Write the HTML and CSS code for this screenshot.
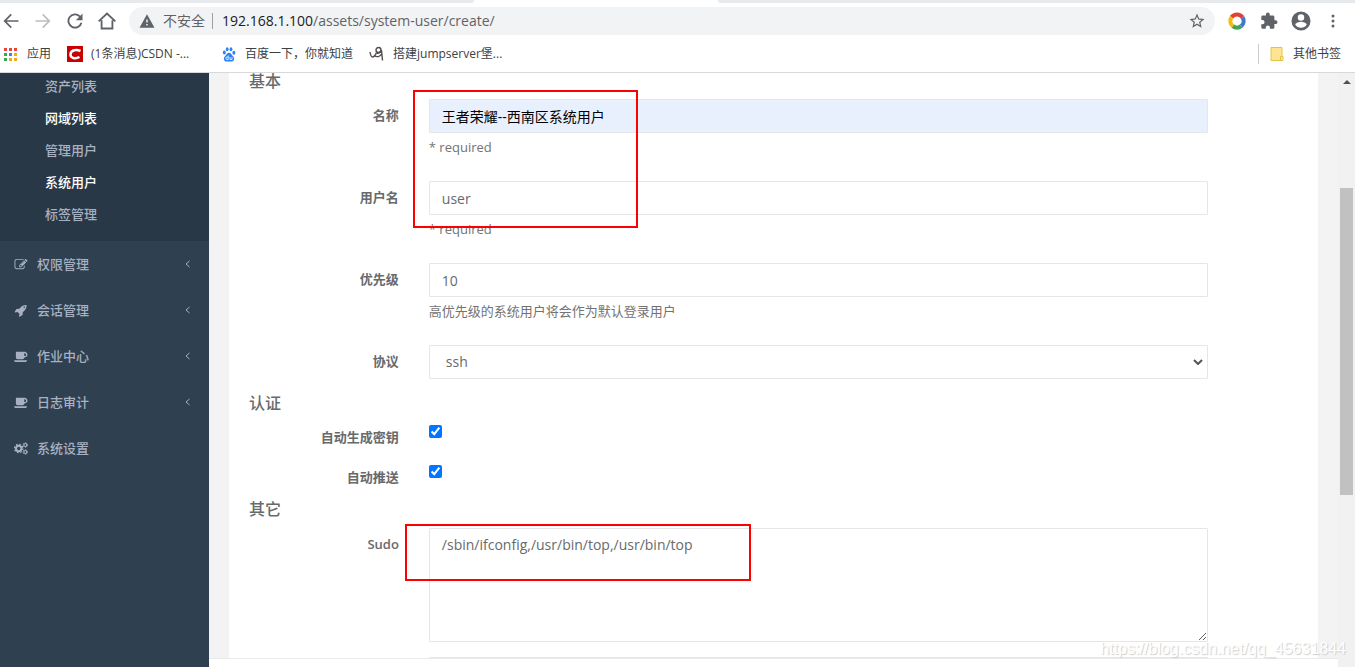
FILE: index.html
```html
<!DOCTYPE html>
<html lang="zh-CN">
<head>
<meta charset="utf-8">
<title>系统用户</title>
<link rel="stylesheet" href="styles.css">
</head>
<body>
<header class="browser">
  <div class="tabs"><span class="tabs-left"></span><span class="tabs-right"></span></div>
  <div class="toolbar">
    <button class="tool" aria-label="后退"><svg viewBox="0 0 24 24"><path d="M21 11H6.8l6.2-6.2L11.6 3.400 3 12l8.600 8.600 1.400-1.400L6.800 13H21z"/></svg></button>
    <button class="tool tool-off" aria-label="前进"><svg viewBox="0 0 24 24"><path d="M3 11h14.200l-6.200-6.200 1.400-1.400L21 12l-8.600 8.600-1.400-1.400 6.200-6.200H3z"/></svg></button>
    <button class="tool" aria-label="刷新"><svg viewBox="0 0 24 24"><path d="M18.4 5.700A9 9 0 1 0 20.800 14h-2.300A6.800 6.800 0 1 1 16.900 7.200L13 11h8V3z"/></svg></button>
    <button class="tool" aria-label="主页"><svg viewBox="0 0 24 24"><path d="M2 12.500 12 3l10 9.500M5.500 11v10h13V11" fill="none" stroke="currentColor" stroke-width="2.2"/></svg></button>
    <div class="omnibox">
      <svg class="omni-icon" viewBox="0 0 24 24"><path d="M2 21h20L12 3zm11-3h-2v-2h2zm0-4h-2v-4h2z"/></svg>
      <span class="unsafe">不安全</span>
      <span class="omni-line"></span>
      <span class="url"><b>192.168.1.100</b>/assets/system-user/create/</span>
      <button class="star" aria-label="收藏"><svg viewBox="0 0 24 24"><path d="M22 9.240l-7.190-.62L12 2 9.190 8.630 2 9.240l5.460 4.730L5.820 21 12 17.270 18.180 21l-1.630-7.030zM12 15.400l-3.760 2.270 1-4.280-3.320-2.880 4.380-.38L12 6.100l1.710 4.040 4.380.38-3.320 2.880 1 4.280z"/></svg></button>
    </div>
    <button class="tool" aria-label="扩展"><svg viewBox="0 0 24 24" fill="none" stroke-width="5"><path d="M5.500 7.500A8 8 0 0 1 18.500 7.500" stroke="#e04335"/><path d="M18.500 7.500A8 8 0 0 1 17 18.200" stroke="#4078d0"/><path d="M17 18.200A8 8 0 0 1 7 18.200" stroke="#3fa352"/><path d="M7 18.200A8 8 0 0 1 5.500 7.500" stroke="#f5b912"/></svg></button>
    <button class="tool" aria-label="扩展程序"><svg viewBox="-1 -1 26 26"><path d="M20.500 11H19V7c0-1.100-.9-2-2-2h-4V3.500a2.500 2.500 0 0 0-5 0V5H4c-1.100 0-2 .9-2 2v3.800h1.500a2.700 2.700 0 0 1 0 5.400H2V20c0 1.100.9 2 2 2h3.800v-1.500a2.700 2.700 0 0 1 5.400 0V22H17c1.100 0 2-.9 2-2v-4h1.500a2.500 2.500 0 0 0 0-5z"/></svg></button>
    <button class="tool" aria-label="个人资料"><svg viewBox="1.500 1.500 21 21"><path d="M12 2a10 10 0 1 0 0 20 10 10 0 0 0 0-20zm0 3a3.400 3.400 0 1 1 0 6.800A3.400 3.400 0 0 1 12 5zm0 14.200a7.200 7.200 0 0 1-6-3.200c0-2 4-3.100 6-3.100s6 1.100 6 3.100a7.200 7.200 0 0 1-6 3.200z"/></svg></button>
    <button class="tool" aria-label="菜单"><svg viewBox="0 0 24 24"><circle cx="12" cy="6" r="1.800"/><circle cx="12" cy="12" r="1.800"/><circle cx="12" cy="18" r="1.800"/></svg></button>
  </div>
  <nav class="bookmarks">
    <a class="bookmark apps" href="#"><svg viewBox="0 0 13 13"><path fill="#e8453c" d="M0 0h3v3H0zM5 0h3v3H5zM10 0h3v3h-3z"/><path fill="#34a853" d="M0 5h3v3H0zM0 10h3v3H0z"/><path fill="#2b8cf0" d="M5 5h3v3H5z"/><path fill="#f4a915" d="M10 5h3v3h-3zM5 10h3v3H5zM10 10h3v3h-3z"/></svg>应用</a>
    <a class="bookmark csdn" href="#"><svg viewBox="0 0 16 16"><path fill="#c80000" d="M0 0h16v16H0z"/><path d="M13.500 5C10 3.500 4 3.500 3.500 8s5 5 9 3" fill="none" stroke="#fff" stroke-width="2.500"/></svg>(1条消息)CSDN -...</a>
    <a class="bookmark" href="#"><svg viewBox="0 0 16 16" fill="#2d82f5"><ellipse cx="3.300" cy="6.600" rx="1.500" ry="2"/><ellipse cx="6.200" cy="3.200" rx="1.400" ry="2"/><ellipse cx="10" cy="3.200" rx="1.400" ry="2"/><ellipse cx="12.900" cy="6.800" rx="1.500" ry="2"/><path d="M8 6.800c2 0 2.500 2.200 4 3.400 2.200 2 1 5.300-1.500 5.300H5.500C2.800 15.500 2 12 4 10.200 5.500 9 6 6.800 8 6.800z"/><path d="M7.200 9.500v4H6a1.200 1.200 0 0 1 0-2.500h1M9 11v2.500h2V11" fill="none" stroke="#fff" stroke-width=".8"/></svg>百度一下，你就知道</a>
    <a class="bookmark" href="#"><svg viewBox="0 0 16 16" fill="none" stroke="#514d4d" stroke-width="1.400"><path d="M1 6c.5 3 1 5 2.500 5 2 0 3-2 4-4.500"/><circle cx="9.500" cy="4" r="2.500"/><path d="M8 7.500c3-.5 4.500-2 4.500-3.500l1 10.500M5 9.500c3 2 6 1.500 8-2"/></svg>搭建jumpserver堡...</a>
    <a class="bookmark other" href="#"><svg viewBox="0 0 14 16"><path d="M1 1.500h11v9h1v4H1z" fill="#ffe593" stroke="#e6c24a"/><path d="M10.500 14v-3.500h2" fill="none" stroke="#e6c24a"/></svg>其他书签</a>
  </nav>
</header>

<div class="page">
  <aside class="sidebar">
    <nav>
      <ul class="submenu">
        <li><a href="#">资产列表</a></li>
        <li><a class="on" href="#">网域列表</a></li>
        <li><a href="#">管理用户</a></li>
        <li><a class="on" href="#">系统用户</a></li>
        <li><a href="#">标签管理</a></li>
      </ul>
      <ul class="menu">
        <li><a href="#"><svg class="menu-icon" viewBox="0 0 1792 1792"><path d="M888 1184l116-116-152-152-116 116v56h96v96h56zm440-720q-16-16-33 1l-350 350q-17 17-1 33t33-1l350-350q17-17 1-33zm80 594v190q0 119-84.500 203.500t-203.500 84.500h-832q-119 0-203.500-84.500t-84.500-203.500v-832q0-119 84.500-203.500t203.500-84.500h832q63 0 117 25 15 7 18 23 3 17-9 29l-49 49q-14 14-32 8-23-6-45-6h-832q-66 0-113 47t-47 113v832q0 66 47 113t113 47h832q66 0 113-47t47-113v-126q0-13 9-22l64-64q15-15 35-7t20 29zm-96-738l288 288-672 672h-288v-288zm444 132l-92 92-288-288 92-92q28-28 68-28t68 28l152 152q28 28 28 68t-28 68z"/></svg>权限管理<svg class="arrow" viewBox="0 0 5 8" fill="none" stroke="currentColor"><path d="M4.500 1 1 4l3.500 3"/></svg></a></li>
        <li><a href="#"><svg class="menu-icon" viewBox="0 0 1792 1792"><path d="M1440 448q0-40-28-68t-68-28-68 28-28 68 28 68 68 28 68-28 28-68zm224-288q0 249-75.500 430.500t-253.500 360.500q-81 80-195 176l-20 379q-2 16-16 26l-384 224q-7 4-16 4-12 0-23-9l-64-64q-13-14-8-32l85-276-281-281-276 85q-3 1-9 1-14 0-23-9l-64-64q-17-19-5-39l224-384q10-14 26-16l379-20q96-114 176-195 188-187 358-258t431-71q14 0 24 9.500t10 22.500z"/></svg>会话管理<svg class="arrow" viewBox="0 0 5 8" fill="none" stroke="currentColor"><path d="M4.500 1 1 4l3.500 3"/></svg></a></li>
        <li><a href="#"><svg class="menu-icon" viewBox="0 0 1920 1792"><path d="M1664 640q0-80-56-136t-136-56h-64v384h64q80 0 136-56t56-136zm-1664 768h1792q0 106-75 181t-181 75h-1280q-106 0-181-75t-75-181zm1856-768q0 159-112.500 271.500t-271.500 112.500h-64v32q0 92-66 158t-158 66h-704q-92 0-158-66t-66-158v-736q0-26 19-45t45-19h1152q159 0 271.500 112.500t112.500 271.500z"/></svg>作业中心<svg class="arrow" viewBox="0 0 5 8" fill="none" stroke="currentColor"><path d="M4.500 1 1 4l3.500 3"/></svg></a></li>
        <li><a href="#"><svg class="menu-icon" viewBox="0 0 1920 1792"><path d="M1664 640q0-80-56-136t-136-56h-64v384h64q80 0 136-56t56-136zm-1664 768h1792q0 106-75 181t-181 75h-1280q-106 0-181-75t-75-181zm1856-768q0 159-112.500 271.500t-271.500 112.500h-64v32q0 92-66 158t-158 66h-704q-92 0-158-66t-66-158v-736q0-26 19-45t45-19h1152q159 0 271.500 112.500t112.500 271.500z"/></svg>日志审计<svg class="arrow" viewBox="0 0 5 8" fill="none" stroke="currentColor"><path d="M4.500 1 1 4l3.500 3"/></svg></a></li>
        <li><a href="#"><svg class="menu-icon" viewBox="0 0 14 13"><g fill="none" stroke="currentColor"><circle cx="4.700" cy="6.500" r="2.700" stroke-width="2"/><circle cx="4.700" cy="6.500" r="4.200" stroke-width="1.200" stroke-dasharray="1.650 1.650"/><circle cx="11.300" cy="3" r="1.500" stroke-width="1.200"/><circle cx="11.300" cy="3" r="2.400" stroke-width=".8" stroke-dasharray="1.250 1.250"/><circle cx="11.300" cy="10" r="1.500" stroke-width="1.200"/><circle cx="11.300" cy="10" r="2.400" stroke-width=".8" stroke-dasharray="1.250 1.250"/></g></svg>系统设置</a></li>
      </ul>
    </nav>
  </aside>

  <main class="content">
    <form class="panel">
      <h3 class="section">基本</h3>
      <div class="row">
        <label class="label" for="name">名称</label>
        <div class="control"><input class="input autofill" id="name" type="text" value="王者荣耀--西南区系统用户"><p class="help">* required</p></div>
      </div>
      <div class="row">
        <label class="label" for="username">用户名</label>
        <div class="control"><input class="input" id="username" type="text" value="user"><p class="help">* required</p></div>
      </div>
      <div class="row">
        <label class="label" for="priority">优先级</label>
        <div class="control"><input class="input" id="priority" type="text" value="10"><p class="help">高优先级的系统用户将会作为默认登录用户</p></div>
      </div>
      <div class="row">
        <label class="label" for="protocol">协议</label>
        <div class="control select-wrap"><select class="input select" id="protocol"><option>ssh</option></select><svg class="caret" viewBox="0 0 10 6" fill="none"><path d="M1 1l4 4 4-4"/></svg></div>
      </div>
      <h3 class="section">认证</h3>
      <div class="row check-row">
        <label class="label" for="autokey">自动生成密钥</label>
        <div class="control"><input class="check" id="autokey" type="checkbox" checked></div>
      </div>
      <div class="row check-row">
        <label class="label" for="autopush">自动推送</label>
        <div class="control"><input class="check" id="autopush" type="checkbox" checked></div>
      </div>
      <h3 class="section">其它</h3>
      <div class="row area-row">
        <label class="label" for="sudo">Sudo</label>
        <div class="control"><textarea class="input area" id="sudo">/sbin/ifconfig,/usr/bin/top,/usr/bin/top</textarea></div>
      </div>
      <div class="row">
        <span></span>
        <div class="control"><input class="input" type="text" aria-label="Shell"></div>
      </div>
      <span class="mark mark-names"></span>
      <span class="mark mark-sudo"></span>
    </form>
    <footer class="footer"></footer>
  </main>

  <div class="scrollbar">
    <svg class="scroll-up" viewBox="0 0 8 4" fill="#505050"><path d="M0 4l4-4 4 4z"/></svg>
    <span class="thumb"></span>
    <span class="rest"></span>
  </div>
  <span class="watermark">https://blog.csdn.net/qq_45631844</span>
</div>
</body>
</html>
```

FILE: styles.css
```css
* {
  box-sizing: border-box;
}

body {
  margin: 0;
  height: 100vh;
  display: flex;
  flex-direction: column;
  overflow: hidden;
  font: 13px/20px "Open Sans", "Noto Sans CJK SC", sans-serif;
  color: #676a6c;
}

a {
  color: inherit;
  text-decoration: none;
}

button {
  padding: 0;
  border: 0;
  background: none;
  color: inherit;
}

svg {
  display: block;
  flex: none;
}

svg:not([fill]) {
  fill: currentColor;
}

ul {
  margin: 0;
  padding: 0;
  list-style: none;
}

/* Browser frame */
.browser {
  flex: none;
  background: #fff;
  border-bottom: 1px solid #d8d9dc;
  color: #5f6368;
}

.tabs {
  display: flex;
  justify-content: space-between;
  height: 3px;
}

.tabs-left {
  width: 35%;
  background: #e7eaed;
  border-bottom-right-radius: 3px;
}

.tabs-right {
  width: 47%;
  background: #e7eaed;
  border-bottom-left-radius: 3px;
}

.toolbar {
  display: flex;
  align-items: center;
  gap: 12px;
  height: 36px;
  padding: 0 12px 0 1px;
}

.tool svg {
  width: 20px;
  height: 20px;
}

.tool-off {
  color: #bcbec1;
}

.omnibox {
  flex: 1;
  display: flex;
  align-items: center;
  height: 28px;
  padding: 0 9px;
  border-radius: 14px;
  background: #f1f3f4;
  font-size: 14px;
}

.omni-icon,
.star svg {
  width: 18px;
  height: 18px;
}

.unsafe {
  margin-left: 7px;
}

.omni-line {
  width: 1px;
  height: 16px;
  margin: 0 9px 0 7px;
  background: #9aa0a6;
}

.url {
  flex: 1;
}

.url b {
  font-weight: 400;
  color: #202124;
}

.bookmarks {
  display: flex;
  align-items: center;
  gap: 16px;
  height: 33px;
  padding: 0 14px 3px 4px;
  font-size: 12px;
  color: #3c4043;
}

.bookmark {
  display: flex;
  align-items: center;
  gap: 8px;
  white-space: nowrap;
}

.bookmark svg {
  width: 16px;
  height: 16px;
}

.bookmark.apps {
  gap: 10px;
}

.bookmark.apps svg {
  width: 13px;
  height: 13px;
}

.csdn {
  min-width: 138px;
}

.other {
  margin-left: auto;
  padding-left: 10px;
  border-left: 1px solid #c9cbce;
}

/* Page */
.page {
  position: relative;
  flex: 1;
  min-height: 0;
  display: flex;
}

.sidebar {
  flex: none;
  width: 209px;
  background: #2f4050;
  color: #a7b1c2;
  font-weight: 500;
}

.submenu {
  padding-bottom: 8px;
  background: #293846;
}

.submenu a {
  display: block;
  padding: 3px 0 9px 45px;
}

.submenu .on {
  color: #fff;
}

.menu a {
  display: flex;
  align-items: center;
  height: 46px;
  padding: 0 19px 0 14px;
}

.menu-icon {
  width: 14px;
  height: 13px;
  margin-right: 9px;
}

.arrow {
  width: 5px;
  height: 8px;
  margin-left: auto;
}

.content {
  flex: 1;
  min-width: 0;
  display: flex;
  flex-direction: column;
  background: #f3f3f4;
}

.panel {
  position: relative;
  flex: 1;
  min-height: 0;
  overflow: hidden;
  margin: 0 20px;
  padding: 0 5px;
  background: #fff;
}

.section {
  margin: 0;
  padding: 0 15px 10px;
  font-size: 16px;
  line-height: 16px;
  font-weight: 500;
}

.row {
  display: grid;
  grid-template-columns: 2fr 9fr 1fr;
  margin-bottom: 16px;
}

.label {
  padding: 6px 15px;
  text-align: right;
  font-weight: 600;
}

.control {
  min-width: 0;
  padding: 0 15px;
}

.input {
  display: block;
  width: 100%;
  height: 34px;
  margin: 0;
  padding: 6px 12px;
  border: 1px solid #e5e6e7;
  border-radius: 1px;
  background: #fff;
  font: inherit;
  font-size: 14px;
  color: inherit;
}

.autofill {
  background: #e8f0fe;
  color: #000;
}

.help {
  margin: 4px 0 8px;
  color: #737373;
}

.select-wrap {
  position: relative;
}

.select {
  appearance: none;
  padding-left: 16px;
}

.caret {
  position: absolute;
  top: 14px;
  right: 20px;
  width: 10px;
  height: 6px;
  stroke: #555;
  stroke-width: 2;
}

.check-row {
  height: 34px;
  margin-bottom: 6px;
}

.check {
  display: block;
  width: 13px;
  height: 13px;
  margin: 4px 0 0;
}

.area-row {
  margin: 1px 0 15px;
}

.area {
  height: 114px;
}

/* Red highlight frames over the form */
.mark {
  position: absolute;
  border: 2px solid #f00;
}

.mark-names {
  left: 184px;
  top: 17px;
  width: 225px;
  height: 138px;
}

.mark-sudo {
  left: 176px;
  top: 451px;
  width: 346px;
  height: 57px;
}

.footer {
  height: 9px;
  background: #fff;
  border-top: 1px solid #e7eaec;
}

.scrollbar {
  flex: none;
  display: flex;
  flex-direction: column;
  width: 17px;
  padding: 0 2px;
  background: #f1f1f1;
}

.scroll-up {
  width: 8px;
  height: 4px;
  margin: 7px auto 0;
}

.thumb {
  flex: 307;
  margin-top: 104px;
  background: #c1c1c1;
}

.rest {
  flex: 172;
}

.watermark {
  position: absolute;
  right: 9px;
  bottom: 8px;
  font: 16px/20px "Liberation Sans", sans-serif;
  color: #fff;
  text-shadow: 1px 1px 1px #ccc;
}
```
